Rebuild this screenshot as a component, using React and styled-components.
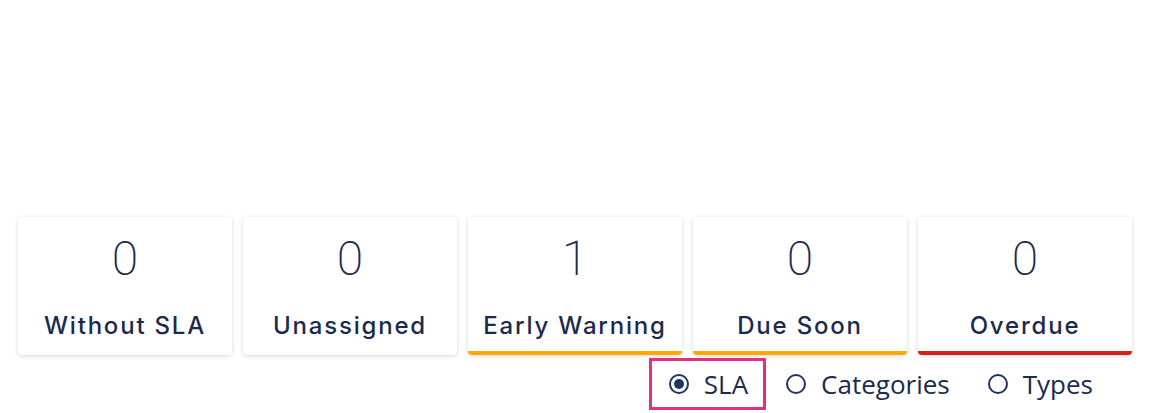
import React, { useState } from "react";
import styled, { createGlobalStyle } from "styled-components";

const GlobalStyle = createGlobalStyle`
  html, body {
    margin: 0;
    padding: 0;
    background: #ffffff;
  }
`;

const Page = styled.div`
  width: 1154px;
  height: 413px;
  box-sizing: border-box;
  padding: 217px 22px 0 18px;
  font-family: "Open Sans", Arial, sans-serif;
  color: #1b2a4e;
`;

const CardRow = styled.div`
  display: grid;
  grid-template-columns: repeat(5, 214px);
  gap: 11px;
`;

const Card = styled.div`
  height: 138px;
  box-sizing: border-box;
  background: #ffffff;
  border-radius: 4px;
  border-bottom: 4px solid ${({ $bar }) => $bar || "transparent"};
  box-shadow: 0 1px 4px rgba(0, 0, 0, 0.16);
  display: flex;
  flex-direction: column;
  align-items: center;
  padding-top: 14px;
`;

const Count = styled.div`
  font-family: Roboto, "Open Sans", sans-serif;
  font-weight: 200;
  font-size: 48px;
  line-height: 56px;
  color: #1b2a4e;
`;

const Label = styled.div`
  margin-top: 25px;
  font-family: Inter, "Open Sans", sans-serif;
  font-weight: 500;
  font-size: 24px;
  letter-spacing: 1.8px;
  line-height: 28px;
  color: #1b2a4e;
`;

const RadioRow = styled.div`
  display: flex;
  justify-content: flex-end;
  margin-top: 3px;
  padding-right: 21px;
`;

const RadioItem = styled.label`
  display: flex;
  align-items: center;
  gap: 15px;
  height: 46px;
  padding: 0 15px 0 17px;
  border: 3px solid ${({ $focused }) => ($focused ? "#e0307f" : "transparent")};
  cursor: pointer;
  font-size: 26px;
  color: #1b2a4e;
`;

const Circle = styled.span`
  width: 20px;
  height: 20px;
  box-sizing: border-box;
  border-radius: 50%;
  border: 2.7px solid #1f3560;
  display: flex;
  align-items: center;
  justify-content: center;
  &::after {
    content: "";
    width: 10px;
    height: 10px;
    border-radius: 50%;
    background: ${({ $checked }) => ($checked ? "#1f3560" : "transparent")};
  }
`;

const stats = [
  { label: "Without SLA", count: 0 },
  { label: "Unassigned", count: 0 },
  { label: "Early Warning", count: 1, bar: "#ffa800" },
  { label: "Due Soon", count: 0, bar: "#ffa800" },
  { label: "Overdue", count: 0, bar: "#d0211c" },
];

const options = ["SLA", "Categories", "Types"];

const App = () => {
  const [mode, setMode] = useState("SLA");

  return (
    <>
      <GlobalStyle />
      <Page>
        <CardRow>
          {stats.map((s) => (
            <Card key={s.label} $bar={s.bar}>
              <Count>{s.count}</Count>
              <Label>{s.label}</Label>
            </Card>
          ))}
        </CardRow>
        <RadioRow>
          {options.map((o) => (
            <RadioItem key={o} $focused={mode === o} onClick={() => setMode(o)}>
              <Circle $checked={mode === o} />
              {o}
            </RadioItem>
          ))}
        </RadioRow>
      </Page>
    </>
  );
};

export default App;
